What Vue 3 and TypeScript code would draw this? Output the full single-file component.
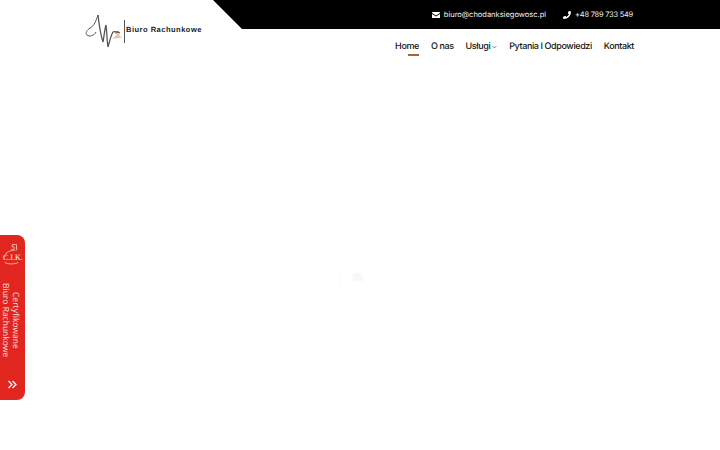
<script setup lang="ts">
const links = [
  { label: 'Home', active: true },
  { label: 'O nas' },
  { label: 'Usługi', caret: true },
  { label: 'Pytania I Odpowiedzi' },
  { label: 'Kontakt' }
]
</script>

<template>
  <div class="page">
    <header class="header">
      <a class="logo" href="#" aria-label="Biuro Rachunkowe">
        <svg class="logo-mark" viewBox="0 0 41 35" aria-hidden="true">
          <path d="M13 1C11 7 9 12 5 14C2 16 0 19 2 21C4 23 9 22 11 18" fill="none" stroke="#555" stroke-width="1" />
          <path d="M13 1C14 10 16 22 18 28C19 22 20 14 21 11C21.800 17 22 27 23 33C24.500 28 26 21 28 18C30 17 32 18 35 19" fill="none" stroke="#555" stroke-width="1.300" />
          <path d="M27 25C29.500 23 32 20.500 33 18.500C34 20.500 35 22.500 37 24C34 24 30 24.300 27 25Z" fill="#dcc9b5" />
          <path d="M30.500 19.500L33.500 17" stroke="#b5522b" stroke-width="1.200" />
        </svg>
        <span class="logo-rule"></span>
        <span class="logo-text">Biuro Rachunkowe</span>
      </a>

      <div class="header-right">
        <div class="topbar">
          <a class="contact" href="#">
            <svg class="contact-icon" viewBox="0 0 16 12" aria-hidden="true">
              <path d="M1.200 0H14.800C15.500 0 16 .5 16 1.200V2L8 7L0 2V1.200C0 .5 .5 0 1.200 0Z" fill="#fff" />
              <path d="M0 3.800L8 8.800L16 3.800V10.800C16 11.500 15.500 12 14.800 12H1.200C.5 12 0 11.500 0 10.800Z" fill="#fff" />
            </svg>
            biuro@chodanksiegowosc.pl
          </a>
          <a class="contact contact-phone" href="#">
            <svg class="contact-icon phone" viewBox="0 0 12 12" aria-hidden="true">
              <path transform="matrix(-1 0 0 1 12 0)" d="M11.600 8.500L9 7.400C8.700 7.300 8.400 7.400 8.200 7.600L7.100 9C5.300 8.100 3.900 6.700 3 4.900L4.400 3.800C4.600 3.600 4.700 3.300 4.600 3L3.500 .4C3.400 .1 3 0 2.700 0L.4 .6C.2 .6 0 .9 0 1.100C0 7.100 4.900 12 10.900 12C11.100 12 11.400 11.800 11.400 11.600L12 9.300C12 9 11.900 8.600 11.600 8.500Z" fill="#fff" />
            </svg>
            +48 789 733 549
          </a>
        </div>

        <nav class="nav">
          <a v-for="link in links" :key="link.label" class="nav-link" :class="{ active: link.active }" href="#">
            {{ link.label }}
            <svg v-if="link.caret" class="caret" viewBox="0 0 8 5" aria-hidden="true">
              <path d="M1 1L4 4L7 1" fill="none" stroke="#333" stroke-width="1" />
            </svg>
          </a>
        </nav>
      </div>
    </header>

    <!-- preloader, nearly invisible in the shot -->
    <svg class="loader" viewBox="0 0 38 36" aria-hidden="true">
      <rect x="1" y="1" width="36" height="34" rx="9" fill="none" stroke="#fdfdfd" stroke-width="1.500" />
      <path d="M13 19V11H20L24 15V19Z" fill="#f8f8f8" />
    </svg>

    <aside class="badge">
      <svg class="badge-logo" viewBox="0 0 20 24" aria-hidden="true">
        <path d="M11 2H14M11 2L10.500 4.500C12 4 13.500 4.500 13 6C12.500 7.500 11 7.500 10 7M15 1.500L15.500 8" fill="none" stroke="#fbe3df" stroke-width=".8" />
        <path d="M14 8C10 8 7 9 4.500 11C3 12.500 4 14 2.500 15.500M3 21C7 23 13 23 17 21" fill="none" stroke="#fbe3df" stroke-width=".7" />
      </svg>
      <span class="badge-mark">C.I.K.</span>
      <div class="badge-text">Certyfikowane<br />Biuro Rachunkowe</div>
      <svg class="badge-arrows" viewBox="0 0 10 9" aria-hidden="true">
        <path d="M1 1L4.500 4.500L1 8M5 1L8.500 4.500L5 8" fill="none" stroke="#fff" stroke-width="1.300" />
      </svg>
    </aside>
  </div>
</template>

<style>
body {
  background: #fff;
}
</style>

<style scoped>
.page {
  height: 450px;
  overflow: hidden;
  font-family: Inter, "Noto Sans", sans-serif;
  text-rendering: geometricPrecision;
  color: #111;
}
a {
  color: inherit;
  text-decoration: none;
}

.header {
  display: flex;
}
.logo {
  width: 213px;
  box-sizing: border-box;
  height: 60px;
  padding: 14px 0 0 85px;
  display: flex;
  align-items: flex-start;
}
.logo-mark {
  width: 41px;
  height: 35px;
  flex-shrink: 0;
}
.logo-rule {
  width: 1px;
  height: 23px;
  margin: 6px 0 0 -2px;
  background: #555;
  flex-shrink: 0;
}
.logo-text {
  margin: 11px 0 0 1px;
  font-family: "Liberation Sans", sans-serif;
  font-size: 7.500px;
  line-height: 10px;
  font-weight: 700;
  letter-spacing: .5px;
  white-space: nowrap;
  color: #222;
}

.header-right {
  flex: 1;
}
.topbar {
  height: 29px;
  padding-right: 87px;
  display: flex;
  justify-content: flex-end;
  align-items: center;
  gap: 17px;
  background: #000;
  clip-path: polygon(0 0, 100% 0, 100% 100%, 29px 100%);
}
.contact {
  display: flex;
  align-items: center;
  gap: 4px;
  color: #f2f2f2;
  font-size: 7.500px;
  white-space: nowrap;
}
.contact-phone {
  letter-spacing: -.25px;
}
.contact-icon {
  width: 8px;
  height: 6px;
}
.contact-icon.phone {
  width: 8px;
  height: 8px;
}

.nav {
  height: 31px;
  padding-right: 86px;
  display: flex;
  justify-content: flex-end;
  gap: 12px;
}
.nav-link {
  position: relative;
  box-sizing: border-box;
  display: flex;
  align-items: center;
  gap: 2px;
  height: 27px;
  padding-top: 7px;
  font-size: 9px;
  font-weight: 500;
  letter-spacing: -.4px;
  white-space: nowrap;
  color: #141414;
}
.nav-link.active::after {
  content: "";
  position: absolute;
  left: 13px;
  bottom: 0;
  width: 11px;
  height: 2px;
  background: #a9662e;
}
.caret {
  width: 5px;
  height: 4px;
  margin-top: 2px;
}

.loader {
  position: absolute;
  left: 340px;
  top: 262px;
  width: 37px;
  height: 36px;
}

.badge {
  position: absolute;
  left: 0;
  top: 235px;
  width: 25px;
  height: 165px;
  background: #e0261e;
  border-radius: 0 8px 8px 0;
  color: #f8dcd8;
}
.badge-logo {
  position: absolute;
  left: 2px;
  top: 7px;
  width: 19px;
  height: 24px;
}
.badge-mark {
  position: absolute;
  left: 3px;
  top: 18px;
  font-family: "Liberation Serif", serif;
  font-size: 8px;
  line-height: 9px;
  color: #fff;
  white-space: nowrap;
}
.badge-text {
  position: absolute;
  left: -2px;
  top: 48px;
  width: 22px;
  writing-mode: vertical-rl;
  font-family: "Open Sans", sans-serif;
  font-size: 8.500px;
  line-height: 10.500px;
  text-align: center;
  white-space: nowrap;
}
.badge-arrows {
  position: absolute;
  left: 7px;
  top: 145px;
  width: 11px;
  height: 9px;
}
</style>
